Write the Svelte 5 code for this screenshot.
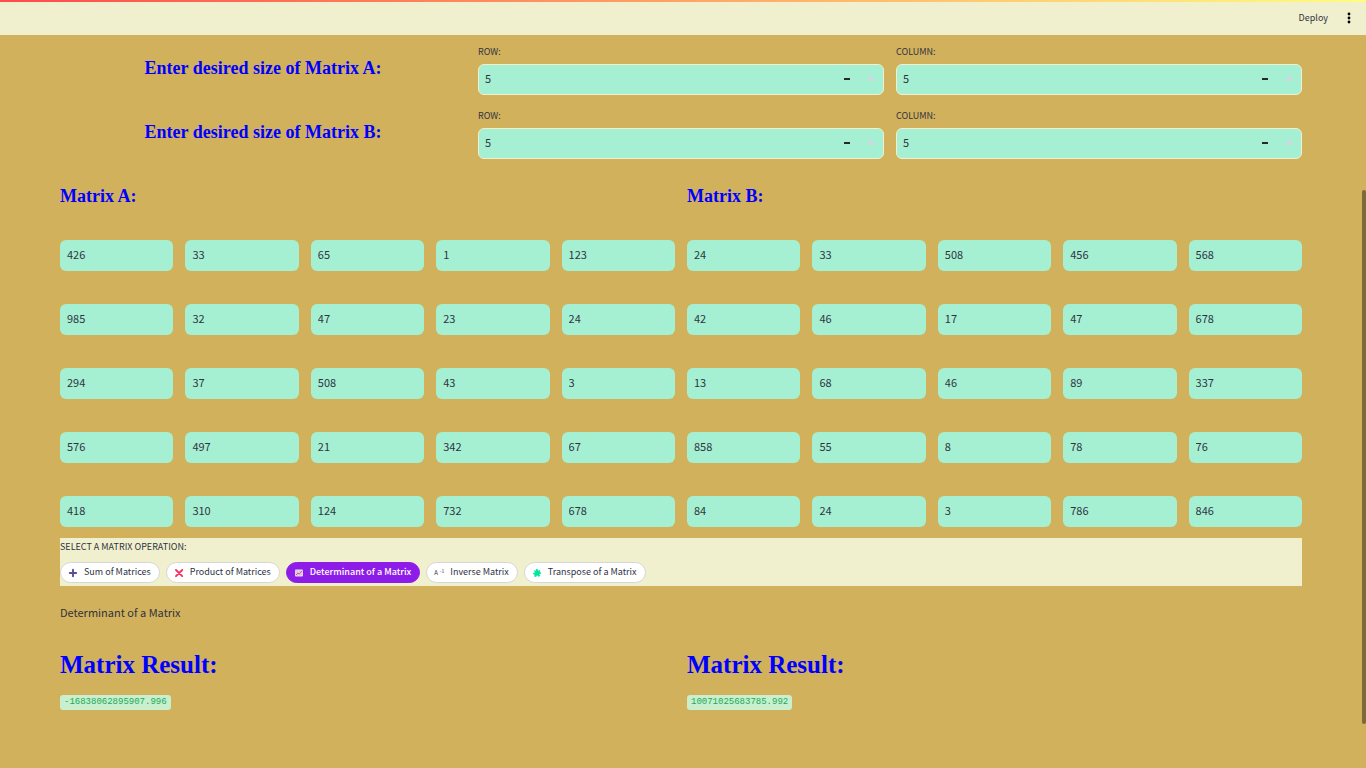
<script>
  const sizes = [
    { name: 'A', row: 5, column: 5 },
    { name: 'B', row: 5, column: 5 },
  ];

  const matrices = [
    {
      name: 'A',
      rows: [
        [426, 33, 65, 1, 123],
        [985, 32, 47, 23, 24],
        [294, 37, 508, 43, 3],
        [576, 497, 21, 342, 67],
        [418, 310, 124, 732, 678],
      ],
      result: '-16838062895907.996',
    },
    {
      name: 'B',
      rows: [
        [24, 33, 508, 456, 568],
        [42, 46, 17, 47, 678],
        [13, 68, 46, 89, 337],
        [858, 55, 8, 78, 76],
        [84, 24, 3, 786, 846],
      ],
      result: '10071025683785.992',
    },
  ];

  const operations = [
    { icon: 'plus', label: 'Sum of Matrices' },
    { icon: 'times', label: 'Product of Matrices' },
    { icon: 'chart', label: 'Determinant of a Matrix' },
    { icon: 'inverse', label: 'Inverse Matrix' },
    { icon: 'puzzle', label: 'Transpose of a Matrix' },
  ];

  let selected = $state('Determinant of a Matrix');
</script>

{#snippet sizeField(id, label, value)}
  <div class="field">
    <label for={id}>{label}</label>
    <div class="stepper">
      <input {id} type="text" inputmode="numeric" {value} />
      <button type="button" aria-label="Decrease">
        <svg viewBox="0 0 8 8" width="8" height="8"><path d="M1 3h6v2H1z" fill="#262730" /></svg>
      </button>
      <button type="button" aria-label="Increase" disabled>
        <svg viewBox="0 0 8 8" width="8" height="8"><path d="M3 1h2v2h2v2H5v2H3V5H1V3h2z" fill="#d0d5e0" /></svg>
      </button>
    </div>
  </div>
{/snippet}

<header>
  <button type="button" class="deploy">Deploy</button>
  <button type="button" class="menu" aria-label="Main menu">
    <svg viewBox="0 0 4 12" width="4" height="12">
      <circle cx="2" cy="2" r="1.4" /><circle cx="2" cy="6" r="1.4" /><circle cx="2" cy="10" r="1.4" />
    </svg>
  </button>
</header>

<main>
  {#each sizes as size}
    <section class="size-row">
      <h3>Enter desired size of Matrix {size.name}:</h3>
      {@render sizeField(`row-${size.name}`, 'ROW:', size.row)}
      {@render sizeField(`column-${size.name}`, 'COLUMN:', size.column)}
    </section>
  {/each}

  <section class="pair">
    {#each matrices as matrix}
      <div>
        <h3 class="matrix-title">Matrix {matrix.name}:</h3>
        <div class="matrix">
          {#each matrix.rows as row, r}
            {#each row as value, c}
              <input type="text" inputmode="numeric" {value} aria-label={`Matrix ${matrix.name}, row ${r + 1}, column ${c + 1}`} />
            {/each}
          {/each}
        </div>
      </div>
    {/each}
  </section>

  <section class="operations">
    <div class="caption" id="operation-label">SELECT A MATRIX OPERATION:</div>
    <div class="pills" role="group" aria-labelledby="operation-label">
      {#each operations as op}
        <button type="button" class="pill" class:active={selected === op.label} aria-pressed={selected === op.label} onclick={() => (selected = op.label)}>
          <span class="icon">
            {#if op.icon === 'plus'}
              <svg viewBox="0 0 10 10" width="10" height="10"><path d="M5 1.8v6.4M1.8 5h6.4" stroke="#5d4e91" stroke-width="1.9" stroke-linecap="round" /></svg>
            {:else if op.icon === 'times'}
              <svg viewBox="0 0 10 10" width="10" height="10"><path d="M2 2l6.2 6.2M8.2 2L2 8.2" stroke="#f92f60" stroke-width="1.9" stroke-linecap="round" /></svg>
            {:else if op.icon === 'chart'}
              <svg viewBox="0 0 10 10" width="10" height="10">
                <rect x="1" y="1.6" width="8" height="7" rx="0.8" fill="#e5d9ec" />
                <path d="M3.4 1.6v6.8M6 1.6v6.8M1.2 4h7.6M1.2 6.3h7.6" stroke="#c9b5d8" stroke-width="0.5" />
                <path d="M1.9 7.1l2-2 1.4.8L8.3 2.8" fill="none" stroke="#d8527c" stroke-width="1" />
              </svg>
            {:else if op.icon === 'inverse'}
              <span class="power">A<sup>-1</sup></span>
            {:else}
              <svg viewBox="0 0 10 10" width="10" height="10">
                <path d="M2.1 2l1.9.8c-.2-1.3.3-2 1.1-1.8.9.1 1 1 .7 1.8l2.3-.7-.3 2.1c.9-.2 1.4.2 1.3 1-.1.8-1 1-1.8.6l1 2.2-2.1.8c-.2-.9-.6-1.4-1.1-1.3-.6.1-.8.7-.7 1.4l-2.2-.4.5-2.1c-1 .3-1.7 0-1.7-.8 0-.8.9-1.1 1.8-.9z" fill="#00e69b" />
              </svg>
            {/if}
          </span>
          <span>{op.label}</span>
        </button>
      {/each}
    </div>
  </section>

  <p class="chosen">{selected}</p>

  <section class="pair">
    {#each matrices as matrix}
      <div>
        <h1>Matrix Result:</h1>
        <code>{matrix.result}</code>
      </div>
    {/each}
  </section>
</main>

<div class="scroll-thumb"></div>

<style>
  :global(body) {
    margin: 0;
    background: #d1b15c;
    color: #31333f;
    font-family: 'Noto Sans CJK SC', 'Noto Sans', sans-serif;
    font-size: 11px;
    line-height: 16px;
  }
  header {
    box-sizing: border-box;
    height: 35px;
    padding: 0 13px 0 0;
    display: flex;
    align-items: center;
    justify-content: flex-end;
    gap: 17px;
    background: linear-gradient(90deg, #ff4b4b, #fffd80) top / 100% 2px no-repeat #f0f0ce;
  }
  button {
    margin: 0;
    padding: 0;
    border: 0;
    background: none;
    color: inherit;
    font: inherit;
  }
  .deploy {
    font-size: 9px;
  }
  .menu {
    display: flex;
    padding: 1px 2px 0;
  }
  main {
    padding: 8px 64px 56px 60px;
  }
  .size-row {
    display: grid;
    grid-template-columns: repeat(3, 1fr);
    gap: 12px;
    height: 52px;
    margin-bottom: 12px;
  }
  h1,
  h3 {
    margin: 0;
    color: #0000ff;
    font-family: 'Liberation Serif', serif;
    font-weight: 700;
  }
  h3 {
    font-size: 18px;
    line-height: 22px;
  }
  .size-row h3 {
    padding-top: 14px;
    text-align: center;
  }
  label,
  .caption {
    display: block;
    padding-top: 1px;
    font-size: 9px;
    line-height: 16px;
  }
  .field label {
    margin-bottom: 4px;
  }
  .stepper {
    display: flex;
    box-sizing: border-box;
    height: 31px;
    border: 1px solid #f0f0ce;
    border-radius: 6px;
    background: #a5f0d3;
    overflow: hidden;
  }
  .stepper button {
    width: 24px;
    padding-bottom: 2px;
    display: flex;
    align-items: center;
    justify-content: center;
  }
  input {
    box-sizing: border-box;
    width: 100%;
    min-width: 0;
    height: 31px;
    padding: 0 7px 3px;
    border: 0;
    border-radius: 6px;
    background: #a5f0d3;
    color: #31333f;
    font: inherit;
  }
  .stepper input {
    flex: 1;
    height: 29px;
    padding: 0 6px 3px;
  }
  .pair {
    display: grid;
    grid-template-columns: 1fr 1fr;
    gap: 12px;
  }
  .matrix-title {
    padding: 14px 0 33px;
  }
  .matrix {
    display: grid;
    grid-template-columns: repeat(5, 1fr);
    gap: 33px 12px;
  }
  .operations {
    margin-top: 11px;
    padding-bottom: 3px;
    background: #f0f0ce;
  }
  .pills {
    display: flex;
    flex-wrap: wrap;
    gap: 6px;
    padding-top: 7px;
  }
  .pill {
    display: flex;
    align-items: center;
    gap: 6px;
    box-sizing: border-box;
    height: 21px;
    padding: 0 8px 0 7px;
    border: 1px solid #d6d6d8;
    border-radius: 11px;
    background: #fff;
    font-size: 9px;
    line-height: 16px;
  }
  .pill > span {
    padding-bottom: 1px;
  }
  .pill.active {
    border-color: #8e1ce8;
    background: #8e1ce8;
    color: #fff;
    font-weight: 500;
  }
  .pill .icon {
    display: flex;
    padding-bottom: 0;
  }
  .power {
    display: flex;
    justify-content: space-between;
    width: 10px;
    font-size: 6px;
    line-height: 10px;
  }
  .power sup {
    font-size: 5px;
    line-height: 6px;
  }
  .chosen {
    margin: 18px 0 30px;
  }
  h1 {
    font-size: 25px;
    line-height: 30px;
    padding-bottom: 15px;
  }
  code {
    display: block;
    width: fit-content;
    padding: 0 4px;
    border-radius: 3px;
    background: #c9efce;
    color: #21a95a;
    font-family: 'Liberation Mono', monospace;
    font-size: 9px;
    line-height: 15px;
  }
  .scroll-thumb {
    position: fixed;
    top: 190px;
    right: 0;
    width: 4px;
    height: 534px;
    border-radius: 2px;
    background: #7d6a37;
  }
</style>
